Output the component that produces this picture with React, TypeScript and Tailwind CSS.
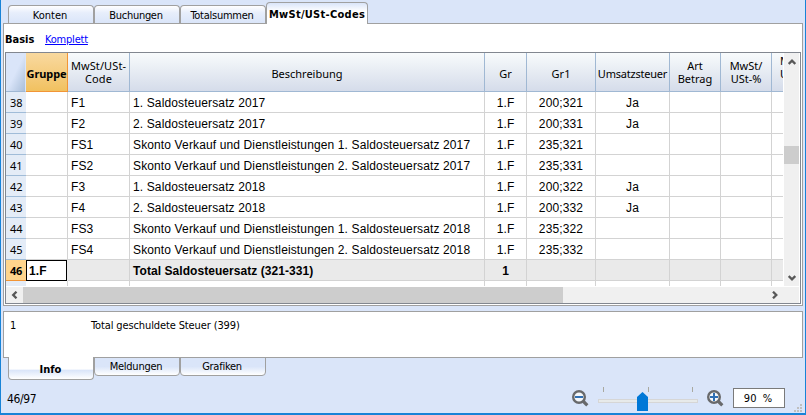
import type { ReactNode } from "react";

type Row = { n: number; code: string; text: string; gr1: string; ja?: boolean };

const rows: Row[] = [
  { n: 38, code: "F1", text: "1. Saldosteuersatz 2017", gr1: "200;321", ja: true },
  { n: 39, code: "F2", text: "2. Saldosteuersatz 2017", gr1: "200;331", ja: true },
  { n: 40, code: "FS1", text: "Skonto Verkauf und Dienstleistungen 1. Saldosteuersatz 2017", gr1: "235;321" },
  { n: 41, code: "FS2", text: "Skonto Verkauf und Dienstleistungen 2. Saldosteuersatz 2017", gr1: "235;331" },
  { n: 42, code: "F3", text: "1. Saldosteuersatz 2018", gr1: "200;322", ja: true },
  { n: 43, code: "F4", text: "2. Saldosteuersatz 2018", gr1: "200;332", ja: true },
  { n: 44, code: "FS3", text: "Skonto Verkauf und Dienstleistungen 1. Saldosteuersatz 2018", gr1: "235;322" },
  { n: 45, code: "FS4", text: "Skonto Verkauf und Dienstleistungen 2. Saldosteuersatz 2018", gr1: "235;332" },
];

const cols = "grid grid-cols-[20px_42px_62px_355px_42px_69px_74px_51px_51px_11px] w-[777px] overflow-hidden";
const cell = "border-r border-b border-[#d3d3d3] flex items-center whitespace-nowrap overflow-hidden pt-[2px]";
const tahoma = "font-['DejaVu_Sans_Condensed','DejaVu_Sans',sans-serif] font-stretch-condensed";
const segoe = "font-['Noto_Sans',sans-serif]";

function Head({ children, className = "" }: { children?: ReactNode; className?: string }) {
  return (
    <div className={`flex items-center justify-center overflow-hidden whitespace-nowrap border-r border-b border-[#a0b8d3] bg-linear-to-b from-[#f8fbfc] to-[#d5dcea] text-center leading-[13px] ${className}`}>
      {children}
    </div>
  );
}

function TopTab({ children, className = "" }: { children: ReactNode; className?: string }) {
  return (
    <div className={`mt-[5px] flex h-[18px] w-[86px] items-center justify-center rounded-t-[4px] border border-b-0 border-[#a0a0a0] bg-linear-to-b from-white via-[#e7eefb] via-40% to-[#dae5f9] pt-[2px] ${className}`}>
      {children}
    </div>
  );
}

function BottomTab({ children }: { children: ReactNode }) {
  return (
    <div className="flex h-[19px] w-[86px] items-center justify-center rounded-b-[4px] border border-[#a0a0a0] bg-linear-to-b from-[#dae5f9] from-50% to-white pt-px pr-[2px] tracking-[-0.25px]">
      {children}
    </div>
  );
}

function Arrow({ d }: { d: string }) {
  return (
    <svg width="8" height="8" viewBox="0 0 8 8" fill="none" stroke="#585858" strokeWidth="2.3">
      <path d={d} />
    </svg>
  );
}

function Magnifier({ plus = false }: { plus?: boolean }) {
  return (
    <svg width="17" height="17" viewBox="0 0 17 17" fill="none">
      <circle cx="7" cy="7" r="5.8" fill="#f5f7fa" stroke="#68696b" strokeWidth="2.4" />
      <path d="M11 11L15.3 15.3" stroke="#68696b" strokeWidth="3.2" />
      <path d={plus ? "M3 7H11M7 3V11" : "M3 7H11"} stroke="#2f6fb3" strokeWidth="2" />
    </svg>
  );
}

export default function App() {
  return (
    <div className={`flex h-[415px] w-[806px] flex-col overflow-hidden border-r border-b-2 border-l border-[#1883d7] bg-[#dae5f9] pr-[2px] pl-[2px] text-[11px] text-black ${tahoma}`}>
      <div className="flex h-[23px] shrink-0 pl-[5px] leading-[14px]">
        <TopTab className="pr-[2px]">Konten</TopTab>
        <TopTab className="pr-[2px] tracking-[-0.3px]">Buchungen</TopTab>
        <TopTab className="pr-[2px] tracking-[-0.25px]">Totalsummen</TopTab>
        <div className="z-10 mt-[2px] flex h-[22px] w-[102px] items-center justify-center rounded-t-[4px] border border-b-0 border-[#a0a0a0] bg-linear-to-b from-[#dae5f9] to-white to-40% font-bold whitespace-nowrap">
          <span className="pt-[2px] tracking-[0.28px]">MwSt/USt-Codes</span>
        </div>
      </div>

      <div className="flex h-[283px] w-[800px] shrink-0 flex-col border border-[#a0a0a0] bg-white pr-px pl-px">
        <div className="flex h-[28px] shrink-0 items-center pt-[5px]">
          <b className="w-[40px]">Basis</b>
          <a className="tracking-[-0.2px] text-[#0000ff] underline">Komplett</a>
        </div>
        <div className="flex h-[252px] w-[796px] flex-col border border-[#828790] bg-white">
          <div className="flex h-[233px]">
            <div className="flex h-[233px] w-[777px] flex-col overflow-hidden">
              <div className={`${cols} h-[39px] shrink-0 text-[11px] ${segoe}`}>
                <Head className="border-r-[#dae5f9]! bg-linear-to-br! from-[#dae5f9]! from-50% to-[#a9bed9]!" />
                <Head className="border-[#f29536]! from-[#f9d99f]! to-[#f1c15f]! pt-[2px] font-bold tracking-[-0.1px]">Gruppe</Head>
                <Head className="tracking-[0.1px]">MwSt/USt-<br />Code</Head>
                <Head className="pt-[2px]">Beschreibung</Head>
                <Head className="pt-[2px]">Gr</Head>
                <Head className="pt-[2px]">Gr1</Head>
                <Head className="pt-[2px] tracking-[-0.22px]">Umsatzsteuer</Head>
                <Head>Art<br />Betrag</Head>
                <Head>MwSt/<br />USt-%</Head>
                <Head className="justify-start! border-r-0 pl-[8px] pb-[11px] text-left">Mw<br />US</Head>
              </div>
              {rows.map((r) => (
                <div key={r.n} className={`${cols} h-[21px] shrink-0 font-['Liberation_Sans',sans-serif] text-[12px] tracking-[0.13px]`}>
                  <div className={`flex items-center border-b border-[#a0bcd8] bg-[#e4ecf7] pt-[2px] pl-[4px] text-[11px] tracking-normal ${segoe}`}>{r.n}</div>
                  <div className={cell} />
                  <div className={`${cell} pl-[3px]`}>{r.code}</div>
                  <div className={`${cell} pl-[3px]`}>{r.text}</div>
                  <div className={`${cell} justify-center`}>1.F</div>
                  <div className={`${cell} justify-center`}>{r.gr1}</div>
                  <div className={`${cell} justify-center`}>{r.ja ? "Ja" : ""}</div>
                  <div className={cell} />
                  <div className={cell} />
                  <div className={`${cell} border-r-0`} />
                </div>
              ))}
              <div className={`${cols} h-[21px] shrink-0 bg-[#eaeaea] font-['Liberation_Sans',sans-serif] text-[12px] font-bold tracking-[0.06px]`}>
                <div className={`flex items-center border-b border-[#f29536] bg-[#ffd58d] pt-[2px] pl-[4px] text-[11px] tracking-[-0.3px] ${segoe}`}>46</div>
                <div className="mr-px flex items-center border border-black bg-white pt-px pl-[2px]">1.F</div>
                <div className={cell} />
                <div className={`${cell} pl-[3px]`}>Total Saldosteuersatz (321-331)</div>
                <div className={`${cell} justify-center`}>1</div>
                <div className={cell} />
                <div className={cell} />
                <div className={cell} />
                <div className={cell} />
                <div className={`${cell} border-r-0`} />
              </div>
              <div className={`${cols} h-[5px] shrink-0`}>
                <div className="bg-[#e4ecf7]" />
                {[0, 1, 2, 3, 4, 5, 6, 7].map((i) => (
                  <div key={i} className="border-r border-[#d3d3d3]" />
                ))}
              </div>
            </div>
            <div className="ml-px flex w-[15px] flex-col items-center justify-between bg-[#f0f0f0] pt-[5px] pb-[4px]">
              <Arrow d="M0.7 6L4 2.7L7.3 6" />
              <div className="mt-[80px] mb-auto h-[18px] w-[15px] bg-[#cdcdcd]" />
              <Arrow d="M0.7 2L4 5.3L7.3 2" />
            </div>
          </div>
          <div className="mt-px flex h-[16px] w-[793px] items-center justify-between bg-[#f0f0f0]">
            <div className="flex h-full items-center">
              <div className="flex w-[17px] justify-center"><Arrow d="M5.5 0.7L2.2 4L5.5 7.3" /></div>
              <div className="h-full w-[540px] bg-[#cdcdcd]" />
            </div>
            <div className="mr-[20px]"><Arrow d="M2 0.7L5.3 4L2 7.3" /></div>
          </div>
        </div>
      </div>

      <div className="mt-[5px] flex h-[47px] w-[800px] shrink-0 border border-[#a0a0a0] bg-white pt-[6px] pl-[6px] leading-[16px]">
        <span className="w-[81px]">1</span>
        <span className="tracking-[-0.12px]">Total geschuldete Steuer (399)</span>
      </div>
      <div className="z-10 -mt-px flex h-[23px] shrink-0 pl-[5px]">
        <div className="flex h-[23px] w-[86px] items-center justify-center rounded-b-[4px] border border-t-0 border-[#a0a0a0] bg-linear-to-b from-white from-55% via-[#dae5f9] via-60% to-white pt-[4px] pr-px font-bold">Info</div>
        <BottomTab>Meldungen</BottomTab>
        <BottomTab>Grafiken</BottomTab>
      </div>

      <div className="flex h-[33px] items-center pl-[4px]">
        <span className="w-[565px] pt-[4px] text-[12px] tracking-[-0.4px]">46/97</span>
        <div className="mt-[3px]"><Magnifier /></div>
        <div className="relative ml-[9px] h-[33px] w-[100px]">
          <div className="flex justify-between px-[5px] pt-[7px]">
            <i className="h-[5px] w-px bg-[#a9a9a0]" />
            <i className="h-[5px] w-px bg-[#a9a9a0]" />
            <i className="h-[5px] w-px bg-[#a9a9a0]" />
          </div>
          <div className="mt-[7px] h-[4px] border border-[#d6d6d6] bg-[#e7eaea]" />
          <svg className="absolute top-[12px] left-[39px]" width="11" height="19" viewBox="0 0 11 19">
            <path d="M0 5L5.5 0L11 5V19H0Z" fill="#0078d7" />
          </svg>
        </div>
        <div className="mt-[3px] ml-[9px]"><Magnifier plus /></div>
        <div className="mt-[3px] ml-[9px] flex h-[20px] w-[52px] items-center justify-center border border-[#7a7a7a] bg-white pt-[2px] pr-[2px] whitespace-pre">90  %</div>
        <svg className="mt-auto mb-px ml-[9px]" width="8" height="8" viewBox="0 0 8 8" fill="#bfbfbf">
          <path d="M6 0h2v2H6zM3 3h2v2H3zM6 3h2v2H6zM0 6h2v2H0zM3 6h2v2H3zM6 6h2v2H6z" />
        </svg>
      </div>
    </div>
  );
}
